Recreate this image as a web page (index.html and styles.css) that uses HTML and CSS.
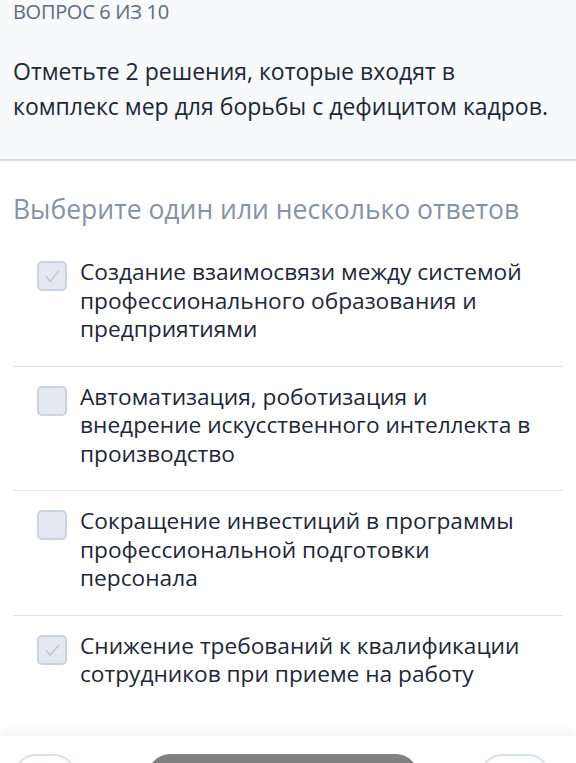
FILE: index.html
```html
<!DOCTYPE html>
<html lang="ru">
<head>
    <meta charset="UTF-8">
    <meta name="viewport" content="width=device-width, initial-scale=1.0">
    <title>Вопрос 6 из 10</title>
    <link rel="stylesheet" href="styles.css">
</head>
<body>
    <div class="question-head">
        <div class="counter">ВОПРОС 6 ИЗ 10</div>
        <p class="question-text">Отметьте 2 решения, которые входят в комплекс мер для борьбы с дефицитом кадров.</p>
    </div>

    <div class="answers">
        <h2 class="hint">Выберите один или несколько ответов</h2>
        <ul class="options">
            <li class="option checked">
                <span class="box"><svg viewBox="0 0 30 30"><path d="M8 15.5l5 5.5 10-12"/></svg></span>
                <span class="label">Создание взаимосвязи между системой профессионального образования и предприятиями</span>
            </li>
            <li class="option">
                <span class="box"></span>
                <span class="label">Автоматизация, роботизация и внедрение искусственного интеллекта в производство</span>
            </li>
            <li class="option">
                <span class="box"></span>
                <span class="label">Сокращение инвестиций в программы профессиональной подготовки персонала</span>
            </li>
            <li class="option checked">
                <span class="box"><svg viewBox="0 0 30 30"><path d="M8 15.5l5 5.5 10-12"/></svg></span>
                <span class="label">Снижение требований к квалификации сотрудников при приеме на работу</span>
            </li>
        </ul>
    </div>

    <div class="bottom-bar">
        <button class="nav-btn prev"></button>
        <button class="main-btn"></button>
        <button class="nav-btn next"></button>
    </div>
</body>
</html>
```

FILE: styles.css
```css
body {
    font-family: 'Open Sans', 'Noto Sans', sans-serif;
    margin: 0;
    background-color: #ffffff;
    color: #1e2736;
    overflow: hidden;
    height: 763px;
    position: relative;
}
.question-head {
    background-color: #f7f9fb;
    border-bottom: 2px solid #d3dae5;
    padding: 0 13px 35px;
}
.counter {
    font-size: 20px;
    line-height: 24px;
    color: #5f6b7b;
    letter-spacing: -0.3px;
}
.question-text {
    margin: 30px 0 0;
    font-size: 23px;
    line-height: 35px;
    padding-right: 13px;
}
.answers {
    padding: 0 13px;
}
.hint {
    margin: 31px 0 0;
    font-size: 26.5px;
    line-height: 34px;
    font-weight: normal;
    color: #8693a6;
}
.options {
    list-style: none;
    margin: 32px 0 0;
    padding: 0;
}
.option {
    display: flex;
    align-items: flex-start;
    gap: 13px;
    padding: 0 18px 22px 24px;
    border-bottom: 1px solid #dfe3e9;
}
.option + .option {
    padding-top: 16px;
}
.option:last-child {
    border-bottom: none;
}
.box {
    flex: none;
    width: 26px;
    height: 26px;
    margin-top: 3px;
    border: 2px solid #c9d3e2;
    border-radius: 5px;
    background-color: #e3e8f1;
}
.box svg {
    display: block;
    width: 26px;
    height: 26px;
    fill: none;
    stroke: #b8c2d1;
    stroke-width: 1.5;
}
.label {
    font-size: 22.7px;
    line-height: 28.5px;
}
.bottom-bar {
    position: absolute;
    left: 0;
    right: 0;
    top: 736px;
    height: 40px;
    background-color: #ffffff;
    box-shadow: 0 -6px 10px rgba(0, 0, 0, 0.04);
    display: flex;
    align-items: flex-start;
    padding: 18px 0 0 14px;
}
.nav-btn {
    height: 44px;
    background: #ffffff;
    border: 2px solid #d7dff0;
    border-radius: 22px;
}
.prev {
    width: 62px;
    margin-right: 72px;
}
.next {
    width: 70px;
}
.main-btn {
    width: 270px;
    height: 44px;
    margin-right: 62px;
    background: #808080;
    border: none;
    border-radius: 22px;
}
```
